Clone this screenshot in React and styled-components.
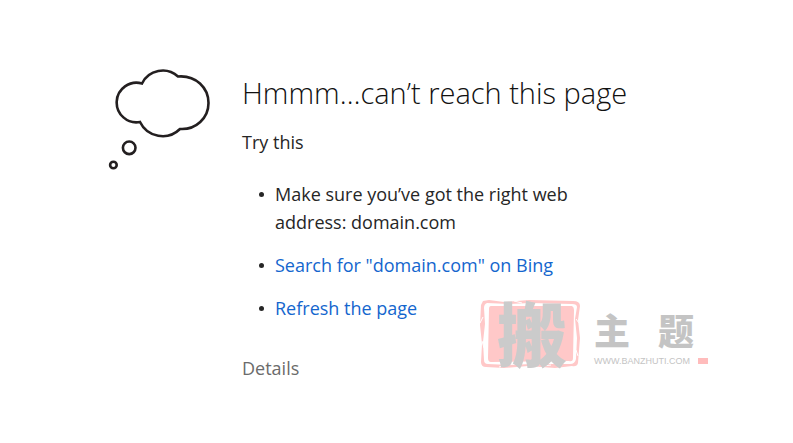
import React from "react";
import styled, { createGlobalStyle } from "styled-components";

const GlobalStyle = createGlobalStyle`
  * { box-sizing: border-box; }
  body {
    margin: 0;
    background: #fff;
    color: #262626;
    font-family: "Open Sans", "Noto Sans", sans-serif;
    font-size: 18px;
    line-height: 28px;
  }
`;

const Page = styled.main`
  position: relative;
  display: flex;
  gap: 32px;
  padding: 68px 80px 56px 108px;
`;

const ThoughtCloud = styled.svg`
  flex: none;
  width: 102px;
  height: 102px;
  fill: none;
  stroke: #231f20;
  stroke-width: 2.6;
`;

const Content = styled.div`
  flex: 1;
  max-width: 400px;
`;

const Title = styled.h1`
  margin: 5px 0 15px;
  color: #111;
  font-size: 29px;
  font-weight: 300;
  line-height: 40px;
  white-space: nowrap;
`;

const Hint = styled.p`
  margin: 0 0 24px;
`;

const Suggestions = styled.ul`
  display: flex;
  flex-direction: column;
  gap: 15px;
  max-width: 340px;
  margin: 0 0 32px;
  padding-left: 17px;
  list-style: none;
`;

const Suggestion = styled.li`
  display: flex;
  gap: 11px;

  &::before {
    content: "";
    flex: none;
    width: 5px;
    height: 5px;
    margin-top: 12px;
    border-radius: 50%;
    background: #262626;
  }
`;

const Link = styled.a`
  color: #1466ce;
  text-decoration: none;
`;

const DetailsButton = styled.button`
  display: block;
  padding: 0;
  border: 0;
  background: none;
  color: #6b6b6b;
  font: inherit;
  cursor: pointer;
`;

const Watermark = styled.div`
  position: absolute;
  top: 299px;
  left: 479px;
  display: flex;
  gap: 8px;
  pointer-events: none;
`;

const BrandSeal = styled.svg`
  flex: none;
  width: 102px;
  height: 72px;
  overflow: visible;
`;

const SealText = styled.text`
  fill: #cbcbcb;
  font-family: "Noto Sans CJK SC", sans-serif;
  font-size: 70px;
  font-weight: 900;
`;

const BrandWords = styled.div`
  display: flex;
  flex-direction: column;
  padding-top: 4px;
  color: #c4c4c4;
`;

const BrandName = styled.div`
  display: flex;
  gap: 28px;
  padding-left: 5px;
  font-family: "Noto Sans CJK SC", sans-serif;
  font-size: 36px;
  font-weight: 900;
  line-height: 52px;
`;

const BrandSite = styled.div`
  display: flex;
  align-items: center;
  gap: 8px;
  padding-left: 5px;
  font-family: "Liberation Sans", Arial, sans-serif;
  font-size: 9px;
  line-height: 12px;
`;

const Flag = styled.span`
  width: 10px;
  height: 6px;
  background: #ffbcbc;
`;

export default function App() {
  return (
    <>
      <GlobalStyle />
      <Page>
        <ThoughtCloud viewBox="108 68 102 102" aria-hidden="true">
          <path d="M142 83.5A23 23 0 0 1 178 76.5C196 75 208.5 88 208.5 103C208.5 118 196 130 180 129A25 25 0 0 1 140 122A19.8 19.8 0 1 1 142 83.5Z" />
          <circle cx="129.2" cy="147.8" r="6.3" />
          <circle cx="113.4" cy="165" r="3.3" />
        </ThoughtCloud>
        <Content>
          <Title>Hmmm…can’t reach this page</Title>
          <Hint>Try this</Hint>
          <Suggestions>
            <Suggestion>Make sure you’ve got the right web address: domain.com</Suggestion>
            <Suggestion><Link href="#search">Search for "domain.com" on Bing</Link></Suggestion>
            <Suggestion><Link href="#refresh">Refresh the page</Link></Suggestion>
          </Suggestions>
          <DetailsButton type="button">Details</DetailsButton>
        </Content>
        <Watermark>
          <BrandSeal viewBox="0 0 102 72">
            <path fill="#ffc8c8" d="M12 7L93 7Q95 8 95 11L94 59Q94 63 90 62L12 63Q9 63 9 59L10 10Q10 7 12 7Z" />
            <path fill="#ffc8c8" fillRule="evenodd" d="M4 2L10 1L25 3L50 1L94 2Q101 2 101 7L99 21L101 39L99 64Q98 68 93 67L76 69L49 67L25 69L7 68Q2 68 2 63L3 45L1 26L2 6ZM8 4Q5 5 5 9L6 25L4 43L5 61Q5 65 9 65L30 66L53 65L91 65Q96 65 97 60L98 39L96 20L98 8Q98 5 93 5L51 4L30 5Z" />
            <path fill="none" stroke="#fff" strokeWidth="1" d="M1 24L4 18M3 42L5 49M35 2L43 4M97 20L100 24M64 67L72 66M97 51L99 57M20 68L29 66" />
            <SealText x="18" y="63">搬</SealText>
          </BrandSeal>
          <BrandWords>
            <BrandName><span>主</span><span>题</span></BrandName>
            <BrandSite>WWW.BANZHUTI.COM<Flag /></BrandSite>
          </BrandWords>
        </Watermark>
      </Page>
    </>
  );
}
